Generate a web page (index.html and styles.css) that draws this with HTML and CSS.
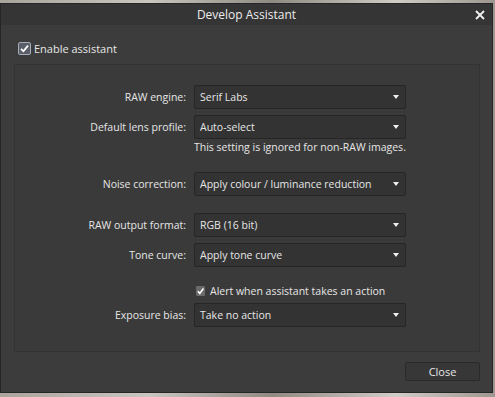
FILE: index.html
```html
<!DOCTYPE html>
<html>
<head>
<meta charset="utf-8">
<link rel="stylesheet" href="styles.css">
</head>
<body>
<div class="window">
  <div class="titlebar">
    <span class="title">Develop Assistant</span>
    <svg class="close-x" width="10" height="10" viewBox="0 0 10 10"><path d="M1 1L9 9M9 1L1 9" stroke="#f2f2f2" stroke-width="1.8" fill="none"/></svg>
  </div>
  <div class="content">
    <label class="check enable">
      <svg class="box" width="13" height="13" viewBox="0 0 13 13"><rect x="0.5" y="0.5" width="12" height="12" rx="1.5" fill="#5a5e68" stroke="#a8acb8"/><path d="M3 6.8L5.4 9.2L10 3.6" stroke="#fff" stroke-width="1.8" fill="none"/></svg>
      <span>Enable assistant</span>
    </label>
    <div class="panel">
      <div class="row r1"><span class="lbl">RAW engine:</span><div class="dd"><span>Serif Labs</span><i class="arrow"></i></div></div>
      <div class="row r2"><span class="lbl">Default lens profile:</span><div class="dd"><span>Auto-select</span><i class="arrow"></i></div></div>
      <div class="hint">This setting is ignored for non-RAW images.</div>
      <div class="row r3"><span class="lbl">Noise correction:</span><div class="dd"><span>Apply colour / luminance reduction</span><i class="arrow"></i></div></div>
      <div class="row r4"><span class="lbl">RAW output format:</span><div class="dd"><span>RGB (16 bit)</span><i class="arrow"></i></div></div>
      <div class="row r5"><span class="lbl">Tone curve:</span><div class="dd"><span>Apply tone curve</span><i class="arrow"></i></div></div>
      <label class="check alert">
        <svg class="box" width="9" height="10" viewBox="0 0 9 10"><rect x="0" y="0" width="9" height="10" rx="1" fill="#6a6a6a"/><path d="M1.8 5.2L3.8 7.4L7.4 2.6" stroke="#fff" stroke-width="1.6" fill="none"/></svg>
        <span>Alert when assistant takes an action</span>
      </label>
      <div class="row r6"><span class="lbl">Exposure bias:</span><div class="dd"><span>Take no action</span><i class="arrow"></i></div></div>
    </div>
    <div class="footer"><button class="btn">Close</button></div>
  </div>
</div>
</body>
</html>
```

FILE: styles.css
```css
html, body {
  margin: 0;
  padding: 0;
}
body {
  width: 495px;
  height: 397px;
  overflow: hidden;
  background: linear-gradient(90deg, #a9a49c 0%, #c9c6c0 30%, #8f8a82 55%, #d0ccc6 80%, #9d978f 100%);
  font-family: "Open Sans", "Noto Sans", sans-serif;
  font-size: 10.5px;
  color: #e6e6e6;
}
.window {
  margin-top: 3px;
  width: 491px;
  height: 388px;
  border: 1px solid #262626;
  background: #3c3c3c;
  display: flex;
  flex-direction: column;
}
.titlebar {
  height: 21px;
  background: #353535;
  display: flex;
  align-items: center;
  justify-content: center;
  position: relative;
}
.title {
  font-size: 12px;
  color: #ececec;
}
.close-x {
  position: absolute;
  right: 7px;
  top: 6px;
}
.content {
  flex: 1;
  display: flex;
  flex-direction: column;
  padding: 0 12px 0 13px;
}
.check {
  display: flex;
  align-items: center;
  gap: 4px;
}
.enable {
  margin-top: 17px;
  margin-left: 4px;
  height: 13px;
  font-size: 11px;
  gap: 3px;
}
.panel {
  margin-top: 9px;
  height: 288px;
  box-sizing: border-box;
  border: 1px solid #333333;
  background: #3a3a3a;
  display: flex;
  flex-direction: column;
  padding-top: 20px;
}
.row {
  display: grid;
  grid-template-columns: 171px 212px;
  column-gap: 8px;
  align-items: center;
  height: 24px;
}
.lbl {
  text-align: right;
  white-space: nowrap;
}
.dd {
  height: 24px;
  box-sizing: border-box;
  border: 1px solid #262626;
  border-radius: 2px;
  background: #333333;
  display: flex;
  align-items: center;
  justify-content: space-between;
  padding: 0 6px 0 5px;
  white-space: nowrap;
}
.arrow {
  width: 0;
  height: 0;
  border-left: 3.5px solid transparent;
  border-right: 3.5px solid transparent;
  border-top: 4px solid #f0f0f0;
}
.r2 { margin-top: 6px; }
.hint {
  margin-left: 179px;
  margin-top: 1px;
  line-height: 14px;
  white-space: nowrap;
}
.r3 { margin-top: 18px; }
.r4 { margin-top: 17px; }
.r5 { margin-top: 6px; }
.alert {
  margin-top: 16px;
  margin-left: 181px;
  height: 16px;
  gap: 5px;
}
.r6 { margin-top: 4px; }
.footer {
  display: flex;
  justify-content: flex-end;
  margin-top: 10px;
}
.btn {
  width: 75px;
  height: 19px;
  border: 1px solid #2a2a2a;
  border-radius: 2px;
  background: #373737;
  color: #e6e6e6;
  font-family: inherit;
  font-size: 11px;
  padding: 0;
}
```
